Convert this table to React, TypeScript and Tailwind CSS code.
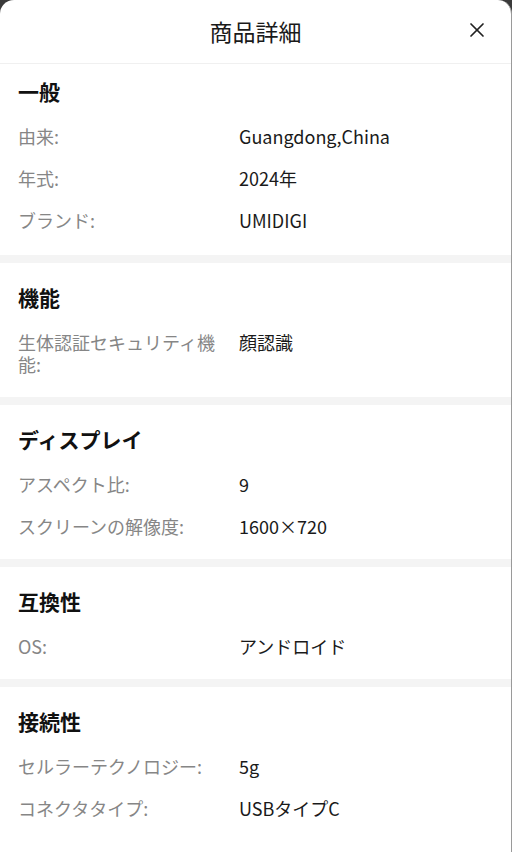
import { X } from 'lucide-react';

const sections = [
  {
    title: '一般',
    rows: [
      ['由来:', 'Guangdong,China'],
      ['年式:', '2024年'],
      ['ブランド:', 'UMIDIGI'],
    ],
  },
  {
    title: '機能',
    rows: [['生体認証セキュリティ機能:', '顔認識']],
  },
  {
    title: 'ディスプレイ',
    rows: [
      ['アスペクト比:', '9'],
      ['スクリーンの解像度:', '1600×720'],
    ],
  },
  {
    title: '互換性',
    rows: [['OS:', 'アンドロイド']],
  },
  {
    title: '接続性',
    rows: [
      ['セルラーテクノロジー:', '5g'],
      ['コネクタタイプ:', 'USBタイプC'],
    ],
  },
];

export default function App() {
  return (
    <div
      className="bg-[#3a3a3a] min-h-[852px] w-[512px]"
      style={{ fontFamily: '"Noto Sans CJK JP", "Noto Sans", sans-serif' }}
    >
      <div className="w-[512px] min-h-[852px] bg-white rounded-t-[14px] border-r border-[#9a9a9a] overflow-hidden">
        <div className="h-[64px] flex items-center justify-center relative border-b border-[#f0f0f0]">
          <h1 className="text-[23px] text-[#1a1a1a] leading-none">商品詳細</h1>
          <button className="absolute right-[22px] top-[18px] text-[#222]">
            <X size={24} strokeWidth={1.7} />
          </button>
        </div>
        {sections.map((s, i) => (
          <div key={s.title}>
            {i > 0 && <div className="h-[8px] bg-[#f4f4f4]" />}
            <div
              className={`px-[18px] ${i === 0 ? 'pt-[13px] pb-[14px]' : 'pt-[20px] pb-[12px]'}`}
            >
              <h2 className="text-[21px] font-bold leading-[28px] text-[#111] mb-[10px]">
                {s.title}
              </h2>
              {s.rows.map(([label, value]) => (
                <div key={label} className="flex items-start py-[10px] text-[18px] leading-[22px]">
                  <div className="w-[213px] shrink-0 text-[#868686]">{label}</div>
                  <div className="ml-[8px] text-[#1a1a1a]">{value}</div>
                </div>
              ))}
            </div>
          </div>
        ))}
      </div>
    </div>
  );
}
